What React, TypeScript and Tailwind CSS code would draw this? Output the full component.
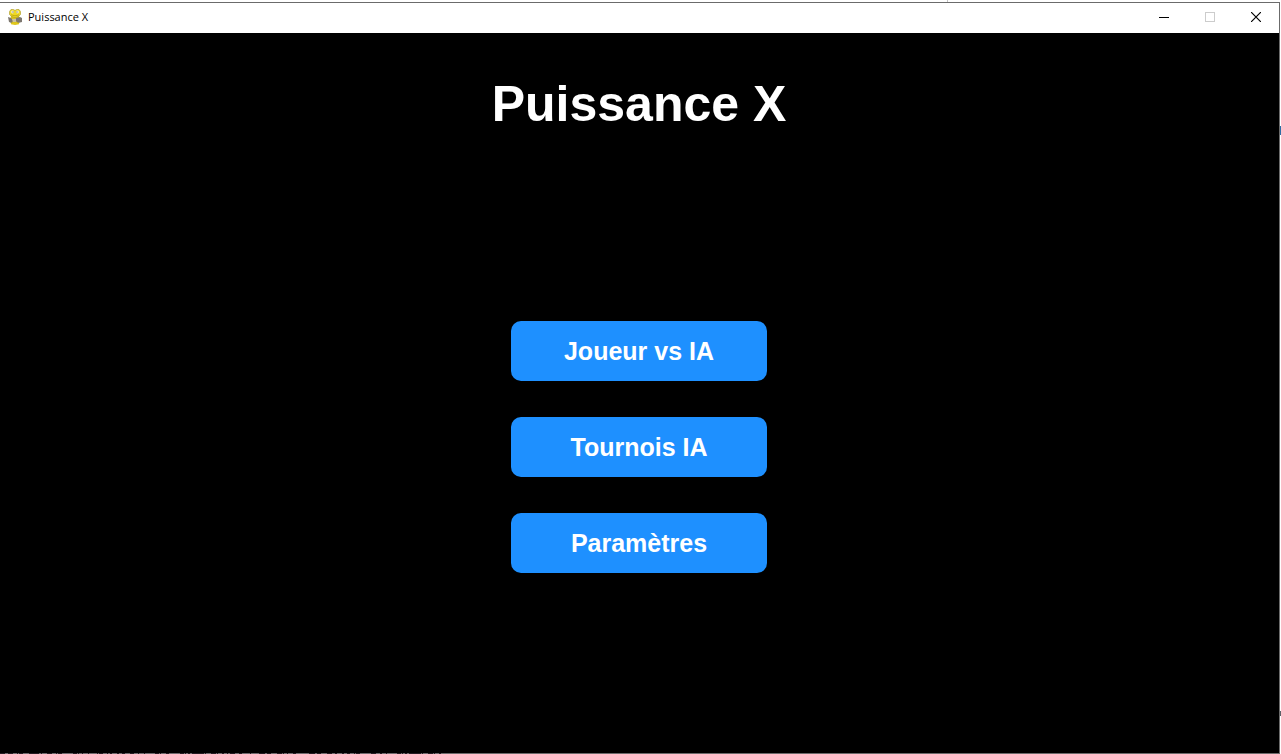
import type { ReactNode } from 'react';

const modes = ['Joueur vs IA', 'Tournois IA', 'Paramètres'];

const dashes =
  'M5 .5h3M13 .5h4M18 .5h1M23 .5h6M39 .5h2M42 .5h5M52 .5h4M57 .5h1M62 .5h11M77 .5h1M79 .5h3M83 .5h5M89 .5h8M98 .5h1M103 .5h4M108 .5h2M112 .5h5M119 .5h3M125 .5h5M134 .5h4M139 .5h5M145 .5h10M159 .5h1M161 .5h5M169 .5h11M184 .5h1M186 .5h2M190 .5h2M204 .5h1M206 .5h5M216 .5h1M218 .5h4M224 .5h3M228 .5h2M235 .5h4M242 .5h8M251 .5h8M265 .5h2M271 .5h6M282 .5h1M284 .5h3M288 .5h5M296 .5h13M315 .5h2M321 .5h6M332 .5h3M337 .5h5M344 .5h3M350 .5h4M355 .5h1M360 .5h11M376 .5h4M382 .5h4M387 .5h10M401 .5h1M403 .5h2M407 .5h2M421 .5h1M423 .5h5M433 .5h1M435 .5h4M441 .5h2';

function SnakeIcon() {
  return (
    <svg width="16" height="16" viewBox="0 0 16 16" aria-hidden="true">
      <path d="M4 7h8l1 3-1 5-4 1-4-1-1-4z" fill="#d9c21c" />
      <path d="M1 8l3 1 2 2-1 3-3-1zM9 9l4-1 2 1v4l-4 1-2-2z" fill="#7d7770" />
      <path d="M5 10h4v3H6z" fill="#c9c0a4" />
      <path d="M4 .5h2.500l1.500 1 1.500-1h2.500l1.500 2v3l-2 2-3.500 1-3.500-1-2-2v-3z" fill="#f0da22" stroke="#a8992c" strokeWidth=".6" />
      <path d="M4 5.800q4 2 8 0" fill="none" stroke="#b79f12" strokeWidth=".8" />
      <circle cx="5.500" cy="3" r="1.400" fill="#efecd2" />
      <circle cx="10.500" cy="3" r="1.400" fill="#efecd2" />
      <path d="M5.500 2.500h1v1h-1zM9.500 2.500h1v1h-1z" fill="#666" />
      <path d="M4 14.500h8" stroke="#e2c91a" strokeWidth="1.500" />
    </svg>
  );
}

function CaptionButton({ label, disabled, children }: { label: string; disabled?: boolean; children: ReactNode }) {
  return (
    <button type="button" aria-label={label} disabled={disabled} className="flex h-full w-[46px] items-center justify-center">
      <svg width="10" height="10" viewBox="0 0 10 10" fill="none" shapeRendering="crispEdges" aria-hidden="true">
        {children}
      </svg>
    </button>
  );
}

export default function App() {
  return (
    <div className="relative flex min-h-screen flex-col bg-white pt-0.5 pr-px font-['Liberation_Sans',sans-serif]">
      <div className="absolute top-0 left-[947px] h-0.5 w-px bg-[#c4c4c4]" />
      <div className="absolute top-[126px] right-0 h-[9px] w-px bg-[#2f6ea5]" />
      <div className="absolute right-0 bottom-[38px] h-[5px] w-px bg-[#5b6066]" />
      <div className="flex grow flex-col border-t border-r border-b border-[#6b6b6b]">
        <header className="flex h-[30px] items-center bg-white pb-0.5 pl-[7px]">
          <SnakeIcon />
          <span className="grow pl-[5px] font-['Open_Sans',sans-serif] text-[11px] leading-4 text-black">Puissance X</span>
          <CaptionButton label="Réduire">
            <path d="M0 5.5h10" stroke="#000" />
          </CaptionButton>
          <CaptionButton label="Agrandir" disabled>
            <path d="M.5.5h9v9h-9z" stroke="#ccc" />
          </CaptionButton>
          <CaptionButton label="Fermer">
            <path d="M0 0l10 10M10 0L0 10" stroke="#000" strokeWidth="1.2" shapeRendering="auto" />
          </CaptionButton>
        </header>
        <main className="flex grow flex-col items-center bg-black pt-[42px] pr-px text-white">
          <h1 className="text-[50px] leading-[58px] font-bold">Puissance X</h1>
          <nav aria-label="Menu" className="flex flex-col gap-9 pt-[188px]">
            {modes.map((mode) => (
              <button key={mode} type="button" className="h-[60px] w-64 rounded-[10px] bg-[#1e90ff] text-[25px] leading-7 font-bold">
                {mode}
              </button>
            ))}
          </nav>
        </main>
      </div>
      <svg className="absolute bottom-0 left-0" width="443" height="1" viewBox="0 0 443 1" shapeRendering="crispEdges" aria-hidden="true">
        <path d="M0 .5h443" stroke="#241c22" />
        <path d={dashes} stroke="#6f6b6e" />
      </svg>
    </div>
  );
}
